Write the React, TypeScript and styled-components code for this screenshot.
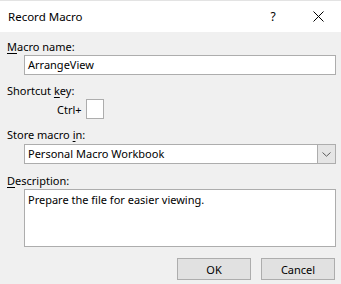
import { FC } from "react";
import styled, { createGlobalStyle } from "styled-components";

const GlobalStyle = createGlobalStyle`
  html, body {
    margin: 0;
    padding: 0;
    background: #f0f0f0;
  }
  body {
    font-family: "Segoe UI", "Noto Sans", "Open Sans", sans-serif;
    font-size: 11px;
    color: #000;
  }
`;

const App: FC = () => {
  return (
    <>
      <GlobalStyle />
      <Sdialog>
        <StitleBar>
          <Stitle>Record Macro</Stitle>
          <Shelp>?</Shelp>
          <Sclose>
            <svg width="11" height="11" viewBox="0 0 11 11">
              <path d="M0.5 0.5 L10.5 10.5 M10.5 0.5 L0.5 10.5" stroke="#000" strokeWidth="1" />
            </svg>
          </Sclose>
        </StitleBar>
        <Sbody>
          <Slabel gap={0}>
            <u>M</u>acro name:
          </Slabel>
          <Sinput gap={1}>ArrangeView</Sinput>

          <Slabel gap={8}>
            Shortcut <u>k</u>ey:
          </Slabel>
          <SkeyRow>
            <span>Ctrl+</span>
            <SkeyBox />
          </SkeyRow>

          <Slabel gap={8}>
            Store macro <u>i</u>n:
          </Slabel>
          <Sselect>
            <SselectText>Personal Macro Workbook</SselectText>
            <SdropButton>
              <svg width="9" height="5" viewBox="0 0 9 5">
                <path d="M0.5 0.5 L4.5 4.2 L8.5 0.5" stroke="#5a5a5a" strokeWidth="1" fill="none" />
              </svg>
            </SdropButton>
          </Sselect>

          <Slabel gap={9}>
            <u>D</u>escription:
          </Slabel>
          <Stextarea>Prepare the file for easier viewing.</Stextarea>

          <Sfooter>
            <Sbutton>OK</Sbutton>
            <Sbutton>Cancel</Sbutton>
          </Sfooter>
        </Sbody>
      </Sdialog>
    </>
  );
};

export default App;

const Sdialog = styled.div`
  width: 341px;
  height: 284px;
  background: #f0f0f0;
  overflow: hidden;
`;

const StitleBar = styled.div`
  height: 31px;
  background: #fff;
  border-top: 1px solid #e3e3e3;
  display: flex;
  align-items: center;
  padding-left: 8px;
`;

const Stitle = styled.div`
  flex: 1;
  font-size: 11.5px;
  line-height: 15px;
`;

const Shelp = styled.div`
  width: 10px;
  text-align: center;
  margin-right: 35px;
  font-size: 12px;
`;

const Sclose = styled.div`
  width: 11px;
  height: 11px;
  margin-right: 17px;
  display: flex;
`;

const Sbody = styled.div`
  display: flex;
  flex-direction: column;
  padding: 7px 5px 0 7px;
`;

const Slabel = styled.div<{ gap: number }>`
  line-height: 15px;
  height: 15px;
  margin-top: ${(p) => p.gap}px;
  u {
    text-decoration-thickness: 1px;
    text-underline-offset: 2px;
  }
`;

const Sinput = styled.div<{ gap: number }>`
  margin: ${(p) => p.gap}px 0 0 17px;
  height: 20px;
  box-sizing: border-box;
  background: #fff;
  border: 1px solid #adadad;
  padding: 0 3px;
  line-height: 18px;
`;

const SkeyRow = styled.div`
  margin: 1px 0 0 50px;
  display: flex;
  align-items: center;
  gap: 4px;
  height: 20px;
`;

const SkeyBox = styled.div`
  width: 18px;
  height: 20px;
  box-sizing: border-box;
  background: #fff;
  border: 1px solid #adadad;
`;

const Sselect = styled.div`
  margin: 2px 0 0 17px;
  height: 20px;
  box-sizing: border-box;
  background: #fff;
  border: 1px solid #adadad;
  display: flex;
`;

const SselectText = styled.div`
  flex: 1;
  padding: 0 3px;
  line-height: 18px;
`;

const SdropButton = styled.div`
  width: 17px;
  background: #e5e5e5;
  border-left: 1px solid #adadad;
  display: flex;
  align-items: center;
  justify-content: center;
`;

const Stextarea = styled.div`
  margin: 1px 0 0 17px;
  height: 58px;
  box-sizing: border-box;
  background: #fff;
  border: 1px solid #adadad;
  padding: 2px 3px;
  line-height: 15px;
`;

const Sfooter = styled.div`
  display: flex;
  justify-content: flex-end;
  gap: 10px;
  margin-top: 11px;
  padding-right: 1px;
`;

const Sbutton = styled.div`
  width: 74px;
  height: 22px;
  box-sizing: border-box;
  background: #e1e1e1;
  border: 1px solid #adadad;
  display: flex;
  align-items: center;
  justify-content: center;
`;
